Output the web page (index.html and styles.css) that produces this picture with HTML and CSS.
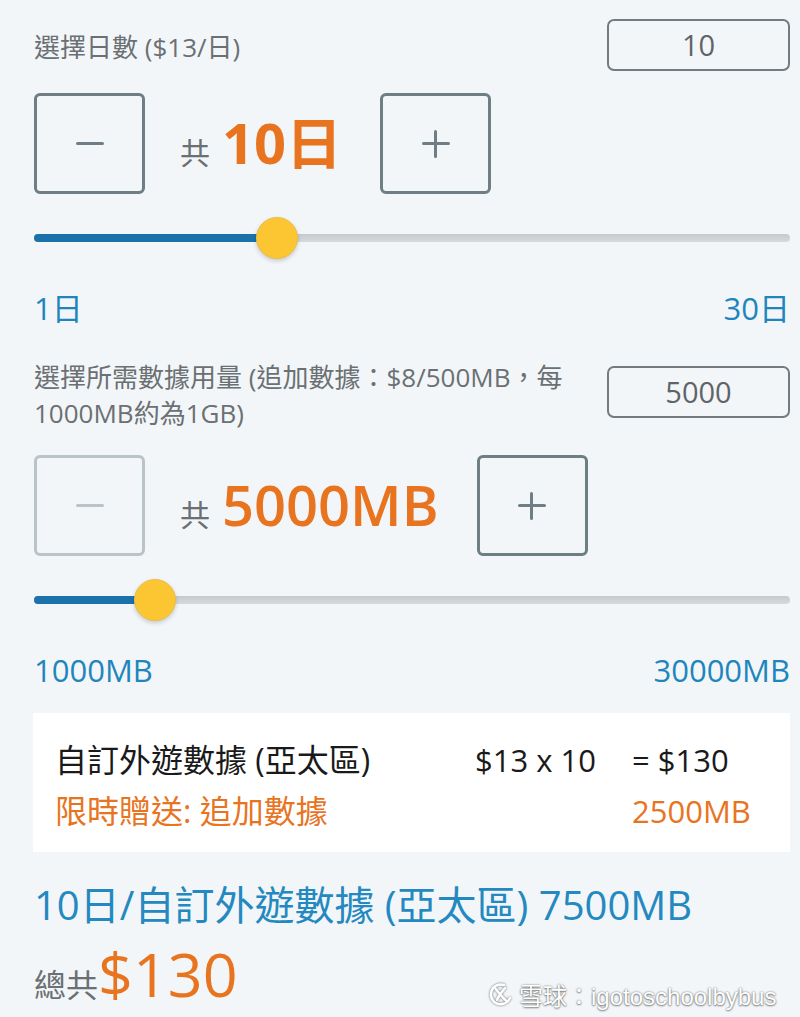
FILE: index.html
```html
<!DOCTYPE html>
<html lang="zh-Hant">
<head>
  <meta charset="UTF-8" />
  <meta name="viewport" content="width=device-width, initial-scale=1.0"/>
  <title>自訂外遊數據</title>
  <link rel="stylesheet" href="styles.css">
</head>
<body>

  <div class="page">

    <!-- days -->
    <div class="head">
      <div class="label">選擇日數 ($13/日)</div>
      <div class="qty">10</div>
    </div>

    <div class="stepper">
      <button class="step"><span class="minus"></span></button>
      <div class="total"><span class="gong">共</span><span class="big">10日</span></div>
      <button class="step"><span class="plus"></span></button>
    </div>

    <div class="slider">
      <div class="track"><div class="fill" style="width: 31%"></div></div>
      <div class="knob" style="left: 222px"></div>
    </div>

    <div class="range">
      <span>1日</span>
      <span>30日</span>
    </div>

    <!-- data -->
    <div class="head head-data">
      <div class="label label-wrap">選擇所需數據用量 (追加數據：$8/500MB，每1000MB約為1GB)</div>
      <div class="qty">5000</div>
    </div>

    <div class="stepper stepper-data">
      <button class="step disabled"><span class="minus"></span></button>
      <div class="total"><span class="gong">共</span><span class="big">5000MB</span></div>
      <button class="step"><span class="plus"></span></button>
    </div>

    <div class="slider">
      <div class="track"><div class="fill" style="width: 15%"></div></div>
      <div class="knob" style="left: 100px"></div>
    </div>

    <div class="range">
      <span>1000MB</span>
      <span>30000MB</span>
    </div>

    <!-- summary -->
    <div class="summary">
      <div class="row">
        <span class="item">自訂外遊數據 (亞太區)</span>
        <span>$13 x 10</span>
        <span>= $130</span>
      </div>
      <div class="row gift">
        <span class="item">限時贈送: 追加數據</span>
        <span></span>
        <span>2500MB</span>
      </div>
    </div>

    <div class="plan">10日/自訂外遊數據 (亞太區) 7500MB</div>

    <div class="grand">
      <span class="grand-label">總共</span><span class="grand-price">$130</span>
    </div>

  </div>

  <div class="watermark">
    <svg class="wm-logo" viewBox="0 0 30 30" width="27" height="27">
      <path d="M19 4.5 A11 11 0 1 0 25.5 19" fill="none" stroke="#fff" stroke-width="2.8" stroke-linecap="round"/>
      <path d="M9.5 8.5 C13 13 17 18 22 22.5 M20 8 C17 11 14 15 11 21" fill="none" stroke="#fff" stroke-width="2.8" stroke-linecap="round"/>
    </svg>
    <span>雪球：igotoschoolbybus</span>
  </div>

</body>
</html>
```

FILE: styles.css
```css
body {
  margin: 0;
  background-color: #f3f6f8;
  font-family: 'Open Sans', 'Noto Sans CJK TC', sans-serif;
  color: #6a7073;
}

.page {
  padding: 19px 10px 0 34px;
  position: relative;
}

.head {
  display: flex;
  justify-content: space-between;
  align-items: flex-start;
  height: 52px;
}

.label {
  font-size: 26px;
  line-height: 56px;
  color: #6a7073;
}

.qty {
  width: 179px;
  height: 48px;
  border: 2px solid #737b80;
  border-radius: 7px;
  text-align: center;
  font-size: 29px;
  line-height: 48px;
  color: #5e6468;
  flex-shrink: 0;
}

.stepper {
  display: flex;
  align-items: center;
  margin-top: 22px;
}

.step {
  width: 111px;
  height: 101px;
  border: 3px solid #6f7d84;
  border-radius: 6px;
  background: transparent;
  display: flex;
  align-items: center;
  justify-content: center;
  padding: 0;
}

.step.disabled {
  border-color: #b9c3c8;
}

.minus, .plus {
  position: relative;
  display: block;
  width: 28px;
  height: 28px;
}

.minus::before, .plus::before, .plus::after {
  content: "";
  position: absolute;
  background: #6f7d84;
  border-radius: 2px;
}

.minus::before, .plus::before {
  left: 0;
  top: 12px;
  width: 28px;
  height: 3px;
}

.plus::after {
  left: 12px;
  top: 0;
  width: 3px;
  height: 28px;
}

.step.disabled .minus::before {
  background: #b9c3c8;
}

.total {
  display: flex;
  align-items: baseline;
  margin: 0 38px 0 35px;
}

.gong {
  font-size: 30px;
  color: #6a7073;
  margin-right: 12px;
}

.big {
  font-size: 56px;
  font-weight: 700;
  color: #e8741f;
  line-height: 1;
}

.stepper-data .big {
  font-weight: 600;
}

.slider {
  position: relative;
  height: 44px;
  margin-top: 22px;
}

.track {
  position: absolute;
  left: 0;
  right: 0;
  top: 18px;
  height: 8px;
  border-radius: 4px;
  background: linear-gradient(#c6cacc, #d7dadc);
  overflow: hidden;
}

.fill {
  height: 100%;
  background: #1b72aa;
}

.knob {
  position: absolute;
  top: 1px;
  width: 40px;
  height: 40px;
  border-radius: 50%;
  background: #fcc633;
  border: 1px solid #ebbd4a;
  box-shadow: 0 2px 4px rgba(0, 0, 0, 0.18);
}

.range {
  display: flex;
  justify-content: space-between;
  margin-top: 30px;
  font-size: 31px;
  line-height: 36px;
  color: #1f86bd;
}

.head-data {
  margin-top: 33px;
  height: 72px;
}

.label-wrap {
  line-height: 36px;
  width: 550px;
}

.head-data .qty {
  margin-top: 7px;
}

.stepper-data {
  margin-top: 24px;
}

.summary {
  margin-top: 25px;
  background: #ffffff;
  padding: 24px 0 18px 22px;
  margin-left: -1px;
}

.row {
  display: grid;
  grid-template-columns: 420px 157px 1fr;
  font-size: 31px;
  line-height: 46px;
  color: #1a1a1a;
}

.row .item {
  font-size: 32px;
}

.row.gift {
  margin-top: 5px;
  color: #e8741f;
}

.plan {
  margin-top: 27px;
  font-size: 40px;
  line-height: 52px;
  color: #2389c0;
}

.grand {
  margin-top: 10px;
  display: flex;
  align-items: baseline;
}

.grand-label {
  font-size: 32px;
  color: #6a7073;
}

.grand-price {
  font-size: 61px;
  line-height: 66px;
  font-weight: 500;
  color: #e8741f;
}

.watermark {
  position: absolute;
  left: 487px;
  top: 977px;
  display: flex;
  align-items: center;
  gap: 5px;
  font-family: 'Liberation Sans', 'Noto Sans CJK SC', sans-serif;
  font-size: 24px;
  color: #ffffff;
  text-shadow: 0 0 2px rgba(0, 0, 0, 0.55), 0 1px 2px rgba(0, 0, 0, 0.4);
}

.wm-logo {
  filter: drop-shadow(0 0 1px rgba(0, 0, 0, 0.6));
}
```
